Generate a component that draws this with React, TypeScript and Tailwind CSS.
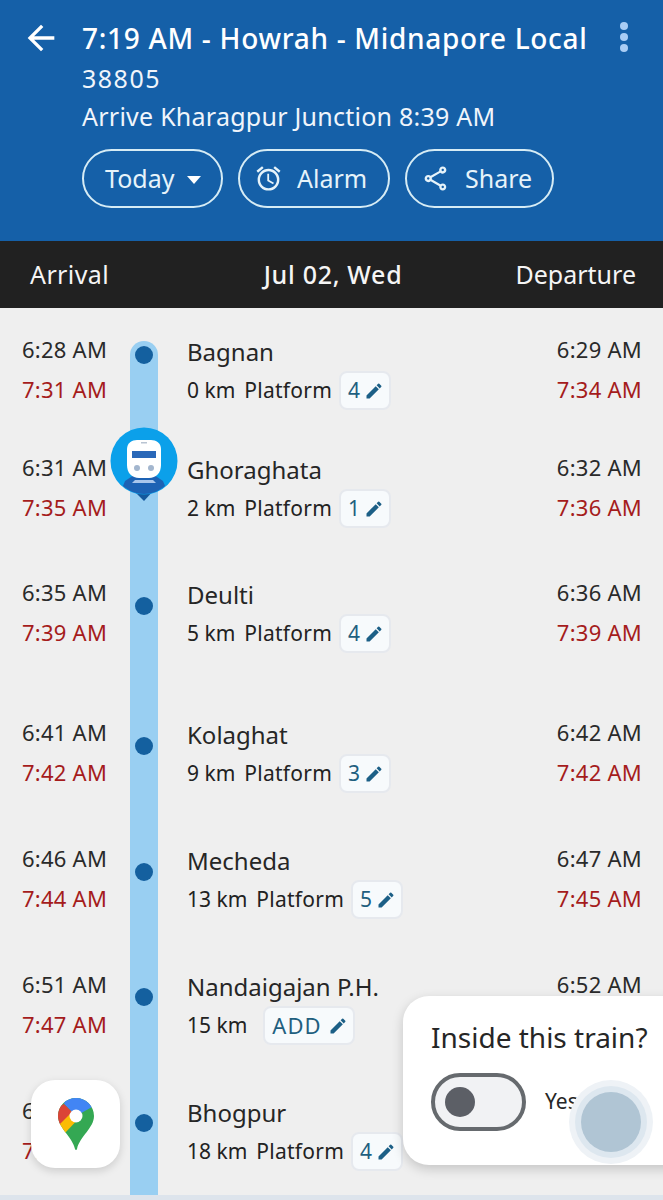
import { MdArrowBack, MdOutlineAlarm, MdOutlineShare } from "react-icons/md";

type Stop = {
  name: string;
  km: string;
  platform?: string;
  arrive: [string, string];
  depart: [string, string];
  height: string;
  dotTop?: string;
};

const stops: Stop[] = [
  { name: "Bagnan", km: "0 km", platform: "4", arrive: ["6:28 AM", "7:31 AM"], depart: ["6:29 AM", "7:34 AM"], height: "h-[118px]" },
  { name: "Ghoraghata", km: "2 km", platform: "1", arrive: ["6:31 AM", "7:35 AM"], depart: ["6:32 AM", "7:36 AM"], height: "h-[125px]" },
  { name: "Deulti", km: "5 km", platform: "4", arrive: ["6:35 AM", "7:39 AM"], depart: ["6:36 AM", "7:39 AM"], height: "h-[140px]", dotTop: "pt-[24px]" },
  { name: "Kolaghat", km: "9 km", platform: "3", arrive: ["6:41 AM", "7:42 AM"], depart: ["6:42 AM", "7:42 AM"], height: "h-[126px]", dotTop: "pt-[24px]" },
  { name: "Mecheda", km: "13 km", platform: "5", arrive: ["6:46 AM", "7:44 AM"], depart: ["6:47 AM", "7:45 AM"], height: "h-[126px]", dotTop: "pt-[24px]" },
  // departure times below this point sit under the "Inside this train?" card
  { name: "Nandaigajan P.H.", km: "15 km", arrive: ["6:51 AM", "7:47 AM"], depart: ["6:52 AM", ""], height: "h-[126px]", dotTop: "pt-[23px]" },
  { name: "Bhogpur", km: "18 km", platform: "4", arrive: ["6:56 AM", "7:50 AM"], depart: ["", ""], height: "h-[104px]", dotTop: "pt-[23px]" },
];

function Pencil() {
  return (
    <svg viewBox="0 0 24 24" className="h-[20px] w-[20px] fill-[#1c5f86]">
      <path d="M3 17.25V21h3.75L17.81 9.94l-3.75-3.75L3 17.25zM20.71 7.04a1 1 0 0 0 0-1.41l-2.34-2.34a1 1 0 0 0-1.41 0l-1.83 1.83 3.75 3.75 1.83-1.83z" />
    </svg>
  );
}

function Chip({ label, wide }: { label: string; wide?: boolean }) {
  return (
    <span className={`flex h-[39px] items-center rounded-lg border-2 border-[#e6e9ee] bg-[#f7fafc] pl-[7px] pr-[5px] text-[#1f5f7f] ${wide ? "gap-[6px] text-[22px] tracking-[1px]" : "gap-[3px] tracking-[0.5px]"}`}>
      {label}
      <Pencil />
    </span>
  );
}

function TrainMarker() {
  return (
    <svg viewBox="0 0 68 76" className="absolute left-[-20px] top-[-21px] h-[76px] w-[68px]">
      <path d="M22 62h23l-11 12z" fill="#14589c" />
      <circle cx="34" cy="34" r="33.5" fill="#0ba0ea" />
      <path d="M15 54l9-6h20l9 6 2 5c-6 5-13 8-21 8s-15-3-21-8z" fill="#1d62b4" />
      <path d="M25 53h18l3 3H22z" fill="#a9c6ec" />
      <path d="M17 38V22c0-6 5-9 10-9h14c5 0 10 3 10 9v16c0 8-5 13-12 13H29c-7 0-12-5-12-13z" fill="#fff" />
      <rect x="22" y="24" width="24" height="7" fill="#2a68b8" />
      <rect x="31" y="15" width="6" height="1.5" fill="#b9c4d2" />
      <circle cx="27" cy="41" r="3" fill="#a3b6ce" />
      <circle cx="41" cy="41" r="3" fill="#a3b6ce" />
    </svg>
  );
}

function MapsPin() {
  return (
    <svg viewBox="0 0 36 52" className="h-[52px] w-[36px]">
      <defs>
        <clipPath id="pin">
          <path d="M18 0C8 0 0 8 0 18c0 12 14 20 17 33 .3 1.300 1.700 1.300 2 0 3-13 17-21 17-33C36 8 28 0 18 0z" />
        </clipPath>
      </defs>
      <g clipPath="url(#pin)">
        <rect width="36" height="52" fill="#34a853" />
        <polygon points="6,6 18,18 34,9 30,-2 8,-2" fill="#4285f4" />
        <polygon points="6,6 18,18 0,28 -2,10" fill="#db4437" />
        <polygon points="0,28 14,14 24,17 7,35" fill="#fbbc04" />
      </g>
      <circle cx="18" cy="18" r="6.5" fill="#fff" />
    </svg>
  );
}

function Row({ stop, index }: { stop: Stop; index: number }) {
  return (
    <div className={`flex ${stop.height}`}>
      <div className="w-[130px] shrink-0 whitespace-nowrap pl-[22px] text-[22px] leading-[40px] tracking-[0.25px]">
        <div className="-mt-[1px] text-[#2a2a2a]">{stop.arrive[0]}</div>
        <div className="text-[#a51c1c]">{stop.arrive[1]}</div>
      </div>
      <div className={`relative w-[28px] shrink-0 ${index === 0 ? "mt-[11px] rounded-t-[14px]" : ""} bg-[#99cff2] ${stop.dotTop ?? "pt-[5px]"}`}>
        {index === 1 ? <TrainMarker /> : <div className="mx-auto h-[18px] w-[18px] rounded-full bg-[#14609f]" />}
      </div>
      <div className="flex-1 pl-[29px]">
        <div className="pt-[4px] text-[24px] leading-[36px] text-[#262626]">{stop.name}</div>
        <div className="mt-[1px] flex h-[39px] items-center text-[21px] text-[#222]">
          <span>{stop.km}</span>
          {stop.platform ? (
            <>
              <span className="ml-[9px] mr-[7px] tracking-[0.25px]">Platform</span>
              <Chip label={stop.platform} />
            </>
          ) : (
            <span className="ml-[16px]">
              <Chip label="ADD" wide />
            </span>
          )}
        </div>
      </div>
      <div className="w-[112px] shrink-0 whitespace-nowrap pr-[21px] text-right text-[22px] leading-[40px] tracking-[0.25px]">
        <div className="-mt-[1px] text-[#2a2a2a]">{stop.depart[0] || "\u00a0"}</div>
        <div className="text-[#a51c1c]">{stop.depart[1] || "\u00a0"}</div>
      </div>
    </div>
  );
}

export default function App() {
  return (
    <div className="relative h-[1200px] w-[663px] overflow-hidden bg-[#efefef] font-['Noto_Sans',sans-serif]">
      <header className="flex h-[241px] bg-[#1560a8] text-white">
        <div className="w-[82px] shrink-0 pl-[21px] pt-[18px]">
          <MdArrowBack size={40} />
        </div>
        <div className="flex-1 pt-[18px]">
          <div className="mb-[1px] flex items-start justify-between pr-[35px]">
            <h1 className="whitespace-nowrap text-[28px] font-medium leading-[40px] tracking-[0.7px]">7:19 AM - Howrah - Midnapore Local</h1>
            <div className="mt-[4px] flex flex-col gap-[3px]">
              <span className="h-[8px] w-[8px] rounded-full bg-[#a9cdf5]" />
              <span className="h-[8px] w-[8px] rounded-full bg-[#a9cdf5]" />
              <span className="h-[8px] w-[8px] rounded-full bg-[#a9cdf5]" />
            </div>
          </div>
          <div className="text-[25px] leading-[38px] tracking-[1.5px] text-[#f0f5fb]">38805</div>
          <div className="text-[25px] leading-[38px] tracking-[0.25px] text-[#f0f5fb]">Arrive Kharagpur Junction 8:39 AM</div>
          <div className="mt-[14px] flex gap-[15px] text-[25px] text-[#e6f3fa]">
            <button className="flex h-[59px] w-[141px] items-center gap-[13px] rounded-[30px] border-2 border-[#d6ecf5] pl-[21px]">
              Today
              <span className="mt-[2px] h-0 w-0 border-x-[7px] border-t-[8px] border-x-transparent border-t-white" />
            </button>
            <button className="flex h-[59px] w-[152px] items-center gap-[14px] rounded-[30px] border-2 border-[#d6ecf5] pl-[14px]">
              <MdOutlineAlarm size={29} />
              Alarm
            </button>
            <button className="flex h-[59px] w-[149px] items-center gap-[15px] rounded-[30px] border-2 border-[#d6ecf5] pl-[14px]">
              <MdOutlineShare size={29} />
              Share
            </button>
          </div>
        </div>
      </header>
      <div className="grid h-[67px] grid-cols-[1fr_auto_1fr] items-center bg-[#212121] pl-[30px] pr-[27px] text-[25px] text-[#f5f5f5]">
        <span className="tracking-[0.4px]">Arrival</span>
        <span className="font-medium tracking-[0.7px]">Jul 02, Wed</span>
        <span className="text-right">Departure</span>
      </div>

      <div className="pt-[22px]">
        {stops.map((stop, index) => (
          <Row key={stop.name} stop={stop} index={index} />
        ))}
      </div>
      <div className="absolute bottom-0 left-0 h-[5px] w-full bg-[#dde4ec]" />

      <div className="absolute left-[31px] top-[1080px] flex h-[88px] w-[89px] items-center justify-center rounded-[24px] bg-white shadow-[0_3px_8px_rgba(0,0,0,0.15)]">
        <MapsPin />
      </div>

      <div className="absolute left-[403px] top-[996px] h-[169px] w-[300px] rounded-[26px] bg-white shadow-[0_4px_12px_rgba(0,0,0,0.18)]">
        <div className="whitespace-nowrap pl-[28px] pt-[21px] text-[28px] leading-[40px] text-[#262626]">Inside this train?</div>
        <div className="mt-[16px] flex items-center pl-[28px]">
          <div className="flex h-[58px] w-[95px] items-center rounded-[29px] border-[4px] border-[#666a6e] bg-[#f1f2f4] pl-[10px]">
            <span className="h-[30px] w-[30px] rounded-full bg-[#5c5f66]" />
          </div>
          <span className="ml-[19px] text-[21px] text-[#262626]">Yes</span>
        </div>
      </div>
      <div className="absolute left-[569px] top-[1080px] flex h-[84px] w-[84px] items-center justify-center rounded-full bg-[#eef2f6]">
        <div className="flex h-[72px] w-[72px] items-center justify-center rounded-full bg-[#dde7ef]">
          <div className="h-[60px] w-[60px] rounded-full bg-[#b0c5d4]" />
        </div>
      </div>
    </div>
  );
}
